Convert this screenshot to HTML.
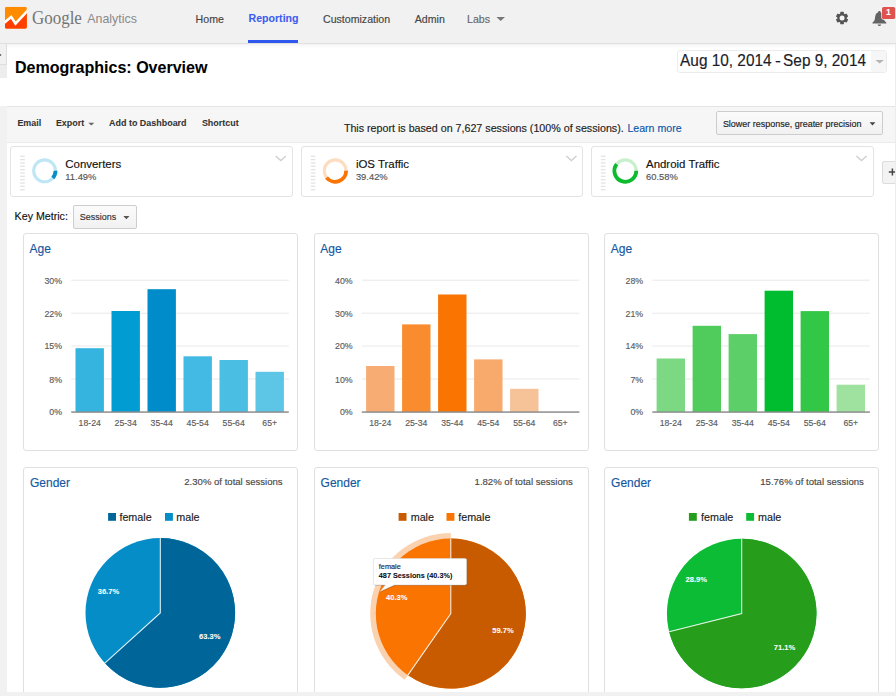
<!DOCTYPE html>
<html lang="en"><head><meta charset="utf-8"><title>Demographics: Overview - Google Analytics</title>
<style>
html,body{margin:0;padding:0;}
html{width:896px;height:696px;overflow:hidden;}
body{width:896px;height:696px;overflow:hidden;position:relative;background:#fff;font-family:"Liberation Sans",sans-serif;}
.t{position:absolute;white-space:nowrap;-webkit-text-stroke:0.15px currentColor;}
.b{position:absolute;box-sizing:border-box;}
svg{position:absolute;left:0;top:0;overflow:visible;}
.serif{font-family:"Liberation Serif",serif;}
</style></head><body>

<div class="b" style="left:0.00px;top:0.00px;width:896.00px;height:44.00px;background:#f1f1f1;border-bottom:1px solid #e0e0e0;box-shadow:0 1px 4px rgba(0,0,0,0.07);"></div>
<div class="b" style="left:0.00px;top:44.00px;width:7.00px;height:34.00px;background:#ededed;"></div>
<div class="b" style="left:0.00px;top:44.00px;width:7.00px;height:21.00px;background:#f1f1f1;border-right:1px solid #dedede;border-bottom:1px solid #dedede;"></div>
<div class="b" style="left:0.00px;top:106.00px;width:7.00px;height:590.00px;background:#f1f1f1;"></div>
<div class="b" style="left:0.00px;top:692.00px;width:896.00px;height:4.00px;background:#f1f1f1;"></div>
<div class="b" style="left:7.00px;top:106.00px;width:889.00px;height:37.00px;background:#f6f6f6;border-top:1px solid #e4e4e4;border-bottom:1px solid #ebebeb;"></div>
<svg width="896" height="44" viewBox="0 0 896 44">
<defs><clipPath id="lg"><rect x="4.9" y="6.8" width="22" height="21.9" rx="1.6"/></clipPath></defs>
<g clip-path="url(#lg)">
<rect x="4.9" y="6.8" width="22" height="21.9" fill="#ff8b00"/>
<path d="M4.9 22.3 L11.15 16.9 L15.5 23.7 L26.9 11.5 L26.9 28.7 L4.9 28.7 Z" fill="#ff3e00"/>
<path d="M3.9 23.1 L11.15 16.9 L15.5 23.7 L27.9 10.4" fill="none" stroke="#fff" stroke-width="2.6" stroke-linejoin="miter"/>
</g>
</svg>
<div class="t serif" style="left:32.20px;top:5.65px;font-size:19.6px;line-height:23.52px;color:#757575;-webkit-text-stroke-width:0;transform:scaleX(0.865);transform-origin:0 50%;">Google</div>
<div class="t " style="left:87.30px;top:12.46px;font-size:12.4px;line-height:14.88px;color:#8a8a8a;-webkit-text-stroke-width:0;">Analytics</div>
<div class="t " style="left:195.60px;top:12.87px;font-size:10.6px;line-height:12.72px;color:#444;">Home</div>
<div class="t " style="left:248.50px;top:12.17px;font-size:10.6px;line-height:12.72px;color:#3a5cf0;font-weight:bold;-webkit-text-stroke-width:0.06px;">Reporting</div>
<div class="b" style="left:248.40px;top:40.00px;width:50.00px;height:3.00px;background:#2f58ee;"></div>
<div class="t " style="left:323.00px;top:12.87px;font-size:10.6px;line-height:12.72px;color:#444;">Customization</div>
<div class="t " style="left:414.80px;top:12.87px;font-size:10.6px;line-height:12.72px;color:#444;">Admin</div>
<div class="t " style="left:467.00px;top:12.87px;font-size:10.6px;line-height:12.72px;color:#666;">Labs</div>
<svg width="896" height="44"><path d="M496.4 17 L505 17 L500.7 21 Z" fill="#777"/></svg>
<svg width="896" height="44">
<path d="M843.24 23.63 L840.86 23.63 L840.71 22.03 L839.27 21.20 L837.81 21.86 L836.63 19.81 L837.93 18.88 L837.93 17.22 L836.63 16.29 L837.81 14.24 L839.27 14.90 L840.71 14.07 L840.86 12.47 L843.24 12.47 L843.39 14.07 L844.83 14.90 L846.29 14.24 L847.47 16.29 L846.17 17.22 L846.17 18.88 L847.47 19.81 L846.29 21.86 L844.83 21.20 L843.39 22.03 Z" fill="#555" stroke="#555" stroke-width="1.2" stroke-linejoin="round"/><circle cx="842.05" cy="18.05" r="2.5" fill="#f4f4f4"/>
<path d="M879.4 11.1 c-0.8 0 -1.2 0.5 -1.2 1.2 c-2.2 0.8 -3.0 3.0 -3.2 5.4 c-0.15 2.0 -0.6 3.4 -2.5 4.9 v0.9 h13.8 v-0.9 c-1.9 -1.5 -2.35 -2.9 -2.5 -4.9 c-0.2 -2.4 -1.0 -4.6 -3.2 -5.4 c0 -0.7 -0.4 -1.2 -1.2 -1.2 Z M877.6 24.4 h3.6 c0 0.9 -0.8 1.5 -1.8 1.5 c-1.0 0 -1.8 -0.6 -1.8 -1.5 Z" fill="#636363"/>
<rect x="881.3" y="6.2" width="14.5" height="13.6" rx="2.2" fill="#f8f1f1"/>
<rect x="882.0" y="6.9" width="13.1" height="12.2" rx="1.6" fill="#e0524f"/>
</svg>
<div class="t " style="left:788.40px;width:200px;text-align:center;top:6.77px;font-size:8.8px;line-height:10.56px;color:#fff;font-weight:bold;-webkit-text-stroke-width:0.06px;">1</div>
<svg width="20" height="80"><path d="M-0.9 52.9 L1.5 54.9 L-0.9 56.9 Z" fill="#555"/></svg>
<div class="t " style="left:15.00px;top:58.01px;font-size:16.05px;line-height:19.26px;color:#000;font-weight:bold;-webkit-text-stroke-width:0.06px;">Demographics: Overview</div>
<div class="b" style="left:677.40px;top:49.50px;width:209.20px;height:23.00px;border:1px solid #ececec;border-radius:3px;background:#fff;"></div>
<div class="b" style="left:870.70px;top:50.50px;width:15.00px;height:21.00px;background:#f6f6f6;border-radius:0 2px 2px 0;"></div>
<div class="t " style="left:680.10px;top:51.84px;font-size:15.38px;line-height:18.46px;color:#1c1c28;transform:scaleY(1.05);transform-origin:0 78%;">Aug 10, 2014</div>
<div class="t " style="left:774.50px;top:51.64px;font-size:15.38px;line-height:18.46px;color:#1c1c28;transform:scaleX(1.15);transform-origin:0 50%;">-</div>
<div class="t " style="left:783.10px;top:51.84px;font-size:15.38px;line-height:18.46px;color:#1c1c28;transform:scaleY(1.05);transform-origin:0 78%;">Sep 9, 2014</div>
<svg width="896" height="80"><path d="M875.4 60 L883.9 60 L879.65 63.4 Z" fill="#b5b5b5"/></svg>
<div class="t " style="left:17.40px;top:117.63px;font-size:8.95px;line-height:10.74px;color:#333;font-weight:bold;-webkit-text-stroke-width:0.06px;">Email</div>
<div class="t " style="left:55.90px;top:117.63px;font-size:8.95px;line-height:10.74px;color:#333;font-weight:bold;-webkit-text-stroke-width:0.06px;">Export</div>
<div class="t " style="left:109.10px;top:117.63px;font-size:8.95px;line-height:10.74px;color:#333;font-weight:bold;-webkit-text-stroke-width:0.06px;">Add to Dashboard</div>
<div class="t " style="left:201.90px;top:117.63px;font-size:8.95px;line-height:10.74px;color:#333;font-weight:bold;-webkit-text-stroke-width:0.06px;">Shortcut</div>
<svg width="896" height="150"><path d="M88.3 122.8 L94.3 122.8 L91.3 125.6 Z" fill="#666"/></svg>
<div class="t " style="left:343.90px;top:121.58px;font-size:10.69px;line-height:12.83px;color:#222;">This report is based on 7,627 sessions (100% of sessions).</div>
<div class="t " style="left:627.40px;top:121.65px;font-size:10.62px;line-height:12.74px;color:#0d57a8;">Learn more</div>
<div class="b" style="left:716.00px;top:111.00px;width:167.00px;height:24.00px;border:1px solid #cdcdcd;border-radius:2px;background:linear-gradient(#fbfbfb,#f1f1f1);"></div>
<div class="t " style="left:722.90px;top:118.50px;font-size:8.98px;line-height:10.78px;color:#222;">Slower response, greater precision</div>
<svg width="896" height="150"><path d="M869.6 122.2 L875.4 122.2 L872.5 125.5 Z" fill="#444"/></svg>
<div class="b" style="left:10.00px;top:146.00px;width:283.00px;height:51.00px;border:1px solid #e3e3e3;border-radius:3px;background:#fff;"></div>
<svg width="896" height="200"><rect x="20.20" y="155.60" width="4.6" height="1.3" fill="#e3e3e3"/><rect x="20.20" y="158.95" width="4.6" height="1.3" fill="#e3e3e3"/><rect x="20.20" y="162.30" width="4.6" height="1.3" fill="#e3e3e3"/><rect x="20.20" y="165.65" width="4.6" height="1.3" fill="#e3e3e3"/><rect x="20.20" y="169.00" width="4.6" height="1.3" fill="#e3e3e3"/><rect x="20.20" y="172.35" width="4.6" height="1.3" fill="#e3e3e3"/><rect x="20.20" y="175.70" width="4.6" height="1.3" fill="#e3e3e3"/><rect x="20.20" y="179.05" width="4.6" height="1.3" fill="#e3e3e3"/><rect x="20.20" y="182.40" width="4.6" height="1.3" fill="#e3e3e3"/><rect x="20.20" y="185.75" width="4.6" height="1.3" fill="#e3e3e3"/><rect x="20.20" y="189.10" width="4.6" height="1.3" fill="#e3e3e3"/><circle cx="44.6" cy="170.8" r="10.95" fill="none" stroke="#bfe6f4" stroke-width="3.1"/><path d="M55.55 170.80 A10.95 10.95 0 0 1 52.82 178.04" fill="none" stroke="#058dc7" stroke-width="3.8"/><path d="M275.70 155.9 L280.80 160.6 L285.90 155.9" fill="none" stroke="#cfcfcf" stroke-width="1.3"/></svg>
<div class="t " style="left:65.30px;top:158.06px;font-size:11.45px;line-height:13.74px;color:#111;">Converters</div>
<div class="t " style="left:65.30px;top:171.00px;font-size:9.4px;line-height:11.28px;color:#555;">11.49%</div>
<div class="b" style="left:301.00px;top:146.00px;width:282.00px;height:51.00px;border:1px solid #e3e3e3;border-radius:3px;background:#fff;"></div>
<svg width="896" height="200"><rect x="310.80" y="155.60" width="4.6" height="1.3" fill="#e3e3e3"/><rect x="310.80" y="158.95" width="4.6" height="1.3" fill="#e3e3e3"/><rect x="310.80" y="162.30" width="4.6" height="1.3" fill="#e3e3e3"/><rect x="310.80" y="165.65" width="4.6" height="1.3" fill="#e3e3e3"/><rect x="310.80" y="169.00" width="4.6" height="1.3" fill="#e3e3e3"/><rect x="310.80" y="172.35" width="4.6" height="1.3" fill="#e3e3e3"/><rect x="310.80" y="175.70" width="4.6" height="1.3" fill="#e3e3e3"/><rect x="310.80" y="179.05" width="4.6" height="1.3" fill="#e3e3e3"/><rect x="310.80" y="182.40" width="4.6" height="1.3" fill="#e3e3e3"/><rect x="310.80" y="185.75" width="4.6" height="1.3" fill="#e3e3e3"/><rect x="310.80" y="189.10" width="4.6" height="1.3" fill="#e3e3e3"/><circle cx="335.2" cy="170.8" r="10.95" fill="none" stroke="#fddcc0" stroke-width="3.1"/><path d="M346.15 170.80 A10.95 10.95 0 0 1 326.58 177.55" fill="none" stroke="#f97400" stroke-width="3.8"/><path d="M566.30 155.9 L571.40 160.6 L576.50 155.9" fill="none" stroke="#cfcfcf" stroke-width="1.3"/></svg>
<div class="t " style="left:355.90px;top:158.06px;font-size:11.45px;line-height:13.74px;color:#111;">iOS Traffic</div>
<div class="t " style="left:355.90px;top:171.00px;font-size:9.4px;line-height:11.28px;color:#555;">39.42%</div>
<div class="b" style="left:591.00px;top:146.00px;width:283.00px;height:51.00px;border:1px solid #e3e3e3;border-radius:3px;background:#fff;"></div>
<svg width="896" height="200"><rect x="600.90" y="155.60" width="4.6" height="1.3" fill="#e3e3e3"/><rect x="600.90" y="158.95" width="4.6" height="1.3" fill="#e3e3e3"/><rect x="600.90" y="162.30" width="4.6" height="1.3" fill="#e3e3e3"/><rect x="600.90" y="165.65" width="4.6" height="1.3" fill="#e3e3e3"/><rect x="600.90" y="169.00" width="4.6" height="1.3" fill="#e3e3e3"/><rect x="600.90" y="172.35" width="4.6" height="1.3" fill="#e3e3e3"/><rect x="600.90" y="175.70" width="4.6" height="1.3" fill="#e3e3e3"/><rect x="600.90" y="179.05" width="4.6" height="1.3" fill="#e3e3e3"/><rect x="600.90" y="182.40" width="4.6" height="1.3" fill="#e3e3e3"/><rect x="600.90" y="185.75" width="4.6" height="1.3" fill="#e3e3e3"/><rect x="600.90" y="189.10" width="4.6" height="1.3" fill="#e3e3e3"/><circle cx="625.3" cy="170.8" r="10.95" fill="none" stroke="#c8f0cc" stroke-width="3.1"/><path d="M636.25 170.80 A10.95 10.95 0 1 1 616.68 164.05" fill="none" stroke="#0cbc2e" stroke-width="3.8"/><path d="M856.40 155.9 L861.50 160.6 L866.60 155.9" fill="none" stroke="#cfcfcf" stroke-width="1.3"/></svg>
<div class="t " style="left:646.00px;top:158.06px;font-size:11.45px;line-height:13.74px;color:#111;">Android Traffic</div>
<div class="t " style="left:646.00px;top:171.00px;font-size:9.4px;line-height:11.28px;color:#555;">60.58%</div>
<div class="b" style="left:881.90px;top:161.40px;width:20.00px;height:22.40px;border:1px solid #dcdcdc;background:#f3f3f3;border-radius:2px 0 0 2px;"></div>
<svg width="896" height="200"><path d="M888.8 172 H896 M892.4 168.4 V175.6" stroke="#444" stroke-width="1.5" fill="none"/></svg>
<div class="t " style="left:14.60px;top:210.21px;font-size:10.66px;line-height:12.79px;color:#111;">Key Metric:</div>
<div class="b" style="left:73.00px;top:205.00px;width:64.00px;height:24.00px;border:1px solid #cdcdcd;border-radius:2px;background:linear-gradient(#fbfbfb,#f1f1f1);"></div>
<div class="t " style="left:79.80px;top:211.70px;font-size:8.98px;line-height:10.78px;color:#333;">Sessions</div>
<svg width="896" height="240"><path d="M123.3 215.9 L129.5 215.9 L126.4 219.2 Z" fill="#555"/></svg>
<div class="b" style="left:23.00px;top:233.00px;width:275.00px;height:218.00px;border:1px solid #e0e0e0;border-radius:3px;background:#fff;"></div>
<div class="t " style="left:29.60px;top:242.01px;font-size:12.03px;line-height:14.44px;color:#15579f;">Age</div>
<svg width="896" height="460"><rect x="71.20" y="279.70" width="217.6" height="1" fill="#e9e9e9"/><rect x="71.20" y="312.70" width="217.6" height="1" fill="#e9e9e9"/><rect x="71.20" y="345.50" width="217.6" height="1" fill="#e9e9e9"/><rect x="71.20" y="378.50" width="217.6" height="1" fill="#e9e9e9"/><rect x="75.50" y="348.20" width="28.4" height="63.40" fill="#35b4e0"/><rect x="111.50" y="311.00" width="28.4" height="100.60" fill="#009cd2"/><rect x="147.50" y="289.20" width="28.4" height="122.40" fill="#008cca"/><rect x="183.50" y="356.30" width="28.4" height="55.30" fill="#42bae3"/><rect x="219.50" y="360.00" width="28.4" height="51.60" fill="#4bbee3"/><rect x="255.50" y="371.80" width="28.4" height="39.80" fill="#5dc5e6"/><rect x="71.20" y="411.55" width="217.6" height="1.0" fill="#555"/></svg>
<div class="t " style="right:834.00px;top:275.77px;font-size:8.8px;line-height:10.56px;color:#5c5c5c;">30%</div>
<div class="t " style="right:834.00px;top:308.77px;font-size:8.8px;line-height:10.56px;color:#5c5c5c;">22%</div>
<div class="t " style="right:834.00px;top:340.97px;font-size:8.8px;line-height:10.56px;color:#5c5c5c;">15%</div>
<div class="t " style="right:834.00px;top:374.57px;font-size:8.8px;line-height:10.56px;color:#5c5c5c;">8%</div>
<div class="t " style="right:834.00px;top:407.47px;font-size:8.8px;line-height:10.56px;color:#5c5c5c;">0%</div>
<div class="t " style="left:-10.30px;width:200px;text-align:center;top:418.37px;font-size:8.7px;line-height:10.44px;color:#5c5c5c;">18-24</div>
<div class="t " style="left:25.70px;width:200px;text-align:center;top:418.37px;font-size:8.7px;line-height:10.44px;color:#5c5c5c;">25-34</div>
<div class="t " style="left:61.70px;width:200px;text-align:center;top:418.37px;font-size:8.7px;line-height:10.44px;color:#5c5c5c;">35-44</div>
<div class="t " style="left:97.70px;width:200px;text-align:center;top:418.37px;font-size:8.7px;line-height:10.44px;color:#5c5c5c;">45-54</div>
<div class="t " style="left:133.70px;width:200px;text-align:center;top:418.37px;font-size:8.7px;line-height:10.44px;color:#5c5c5c;">55-64</div>
<div class="t " style="left:169.70px;width:200px;text-align:center;top:418.37px;font-size:8.7px;line-height:10.44px;color:#5c5c5c;">65+</div>
<div class="b" style="left:314.00px;top:233.00px;width:275.00px;height:218.00px;border:1px solid #e0e0e0;border-radius:3px;background:#fff;"></div>
<div class="t " style="left:320.20px;top:242.01px;font-size:12.03px;line-height:14.44px;color:#15579f;">Age</div>
<svg width="896" height="460"><rect x="361.80" y="279.70" width="217.6" height="1" fill="#e9e9e9"/><rect x="361.80" y="312.70" width="217.6" height="1" fill="#e9e9e9"/><rect x="361.80" y="345.50" width="217.6" height="1" fill="#e9e9e9"/><rect x="361.80" y="378.50" width="217.6" height="1" fill="#e9e9e9"/><rect x="366.10" y="366.00" width="28.4" height="45.60" fill="#f7ac73"/><rect x="402.10" y="324.40" width="28.4" height="87.20" fill="#f88c2e"/><rect x="438.10" y="294.50" width="28.4" height="117.10" fill="#f97400"/><rect x="474.10" y="359.40" width="28.4" height="52.20" fill="#f7aa6c"/><rect x="510.10" y="388.80" width="28.4" height="22.80" fill="#f6c297"/><rect x="361.80" y="411.55" width="217.6" height="1.0" fill="#555"/></svg>
<div class="t " style="right:543.40px;top:275.77px;font-size:8.8px;line-height:10.56px;color:#5c5c5c;">40%</div>
<div class="t " style="right:543.40px;top:308.77px;font-size:8.8px;line-height:10.56px;color:#5c5c5c;">30%</div>
<div class="t " style="right:543.40px;top:340.97px;font-size:8.8px;line-height:10.56px;color:#5c5c5c;">20%</div>
<div class="t " style="right:543.40px;top:374.57px;font-size:8.8px;line-height:10.56px;color:#5c5c5c;">10%</div>
<div class="t " style="right:543.40px;top:407.47px;font-size:8.8px;line-height:10.56px;color:#5c5c5c;">0%</div>
<div class="t " style="left:280.30px;width:200px;text-align:center;top:418.37px;font-size:8.7px;line-height:10.44px;color:#5c5c5c;">18-24</div>
<div class="t " style="left:316.30px;width:200px;text-align:center;top:418.37px;font-size:8.7px;line-height:10.44px;color:#5c5c5c;">25-34</div>
<div class="t " style="left:352.30px;width:200px;text-align:center;top:418.37px;font-size:8.7px;line-height:10.44px;color:#5c5c5c;">35-44</div>
<div class="t " style="left:388.30px;width:200px;text-align:center;top:418.37px;font-size:8.7px;line-height:10.44px;color:#5c5c5c;">45-54</div>
<div class="t " style="left:424.30px;width:200px;text-align:center;top:418.37px;font-size:8.7px;line-height:10.44px;color:#5c5c5c;">55-64</div>
<div class="t " style="left:460.30px;width:200px;text-align:center;top:418.37px;font-size:8.7px;line-height:10.44px;color:#5c5c5c;">65+</div>
<div class="b" style="left:604.00px;top:233.00px;width:275.00px;height:218.00px;border:1px solid #e0e0e0;border-radius:3px;background:#fff;"></div>
<div class="t " style="left:610.70px;top:242.01px;font-size:12.03px;line-height:14.44px;color:#15579f;">Age</div>
<svg width="896" height="460"><rect x="652.30" y="279.70" width="217.6" height="1" fill="#e9e9e9"/><rect x="652.30" y="312.70" width="217.6" height="1" fill="#e9e9e9"/><rect x="652.30" y="345.50" width="217.6" height="1" fill="#e9e9e9"/><rect x="652.30" y="378.50" width="217.6" height="1" fill="#e9e9e9"/><rect x="656.60" y="358.50" width="28.4" height="53.10" fill="#7dd884"/><rect x="692.60" y="325.80" width="28.4" height="85.80" fill="#4fcc5c"/><rect x="728.60" y="334.10" width="28.4" height="77.50" fill="#5ccf68"/><rect x="764.60" y="290.70" width="28.4" height="120.90" fill="#00bd30"/><rect x="800.60" y="311.10" width="28.4" height="100.50" fill="#33c748"/><rect x="836.60" y="384.70" width="28.4" height="26.90" fill="#9fe19f"/><rect x="652.30" y="411.55" width="217.6" height="1.0" fill="#555"/></svg>
<div class="t " style="right:252.90px;top:275.77px;font-size:8.8px;line-height:10.56px;color:#5c5c5c;">28%</div>
<div class="t " style="right:252.90px;top:308.77px;font-size:8.8px;line-height:10.56px;color:#5c5c5c;">21%</div>
<div class="t " style="right:252.90px;top:340.97px;font-size:8.8px;line-height:10.56px;color:#5c5c5c;">14%</div>
<div class="t " style="right:252.90px;top:374.57px;font-size:8.8px;line-height:10.56px;color:#5c5c5c;">7%</div>
<div class="t " style="right:252.90px;top:407.47px;font-size:8.8px;line-height:10.56px;color:#5c5c5c;">0%</div>
<div class="t " style="left:570.80px;width:200px;text-align:center;top:418.37px;font-size:8.7px;line-height:10.44px;color:#5c5c5c;">18-24</div>
<div class="t " style="left:606.80px;width:200px;text-align:center;top:418.37px;font-size:8.7px;line-height:10.44px;color:#5c5c5c;">25-34</div>
<div class="t " style="left:642.80px;width:200px;text-align:center;top:418.37px;font-size:8.7px;line-height:10.44px;color:#5c5c5c;">35-44</div>
<div class="t " style="left:678.80px;width:200px;text-align:center;top:418.37px;font-size:8.7px;line-height:10.44px;color:#5c5c5c;">45-54</div>
<div class="t " style="left:714.80px;width:200px;text-align:center;top:418.37px;font-size:8.7px;line-height:10.44px;color:#5c5c5c;">55-64</div>
<div class="t " style="left:750.80px;width:200px;text-align:center;top:418.37px;font-size:8.7px;line-height:10.44px;color:#5c5c5c;">65+</div>
<div class="b" style="left:23.00px;top:467.00px;width:275.00px;height:240.00px;border:1px solid #e0e0e0;border-radius:3px;background:#fff;"></div>
<div class="t " style="left:30.00px;top:476.04px;font-size:12.0px;line-height:14.4px;color:#15579f;">Gender</div>
<div class="t " style="right:613.40px;top:475.84px;font-size:9.57px;line-height:11.48px;color:#484848;">2.30% of total sessions</div>
<svg width="896" height="696"><rect x="108.10" y="513.0" width="7.9" height="7.8" fill="#00669a"/><rect x="165.00" y="513.0" width="7.9" height="7.8" fill="#058dc7"/><circle cx="160.3" cy="612.9" r="74.8" fill="#058dc7"/><path d="M160.3 612.9 L160.3 538.1 A74.8 74.8 0 1 1 104.82 663.07 Z" fill="#00669a"/><path d="M160.3 538.1 L160.3 612.9 L104.82 663.07" fill="none" stroke="#fff" stroke-opacity="0.9" stroke-width="1.05"/></svg>
<div class="t " style="left:119.40px;top:510.83px;font-size:10.75px;line-height:12.9px;color:#222;">female</div>
<div class="t " style="left:176.30px;top:510.83px;font-size:10.75px;line-height:12.9px;color:#222;">male</div>
<div class="t " style="left:8.40px;width:200px;text-align:center;top:586.65px;font-size:7.55px;line-height:9.06px;color:#fff;font-weight:bold;-webkit-text-stroke-width:0.06px;">36.7%</div>
<div class="t " style="left:109.70px;width:200px;text-align:center;top:631.75px;font-size:7.55px;line-height:9.06px;color:#fff;font-weight:bold;-webkit-text-stroke-width:0.06px;">63.3%</div>
<div class="b" style="left:314.00px;top:467.00px;width:275.00px;height:240.00px;border:1px solid #e0e0e0;border-radius:3px;background:#fff;"></div>
<div class="t " style="left:320.60px;top:476.04px;font-size:12.0px;line-height:14.4px;color:#15579f;">Gender</div>
<div class="t " style="right:323.10px;top:475.84px;font-size:9.57px;line-height:11.48px;color:#484848;">1.82% of total sessions</div>
<svg width="896" height="696"><rect x="398.60" y="513.0" width="7.9" height="7.8" fill="#c85a00"/><rect x="446.50" y="513.0" width="7.9" height="7.8" fill="#f97400"/><path d="M450.8 613.6 L404.66 679.69 A80.6 80.6 0 0 1 450.8 533.0 Z" fill="#fbd2b0"/><circle cx="450.8" cy="613.6" r="75.0" fill="#f97400"/><path d="M450.8 613.6 L450.8 538.6 A75.0 75.0 0 1 1 407.87 675.10 Z" fill="#c85a00"/><path d="M450.8 538.6 L450.8 613.6 L407.87 675.10" fill="none" stroke="#fff" stroke-opacity="0.9" stroke-width="1.05"/></svg>
<div class="t " style="left:410.70px;top:510.83px;font-size:10.75px;line-height:12.9px;color:#222;">male</div>
<div class="t " style="left:458.20px;top:510.83px;font-size:10.75px;line-height:12.9px;color:#222;">female</div>
<div class="t " style="left:296.70px;width:200px;text-align:center;top:592.95px;font-size:7.55px;line-height:9.06px;color:#fff;font-weight:bold;-webkit-text-stroke-width:0.06px;">40.3%</div>
<div class="t " style="left:402.90px;width:200px;text-align:center;top:625.85px;font-size:7.55px;line-height:9.06px;color:#fff;font-weight:bold;-webkit-text-stroke-width:0.06px;">59.7%</div>
<div class="b" style="left:604.00px;top:467.00px;width:275.00px;height:240.00px;border:1px solid #e0e0e0;border-radius:3px;background:#fff;"></div>
<div class="t " style="left:611.10px;top:476.04px;font-size:12.0px;line-height:14.4px;color:#15579f;">Gender</div>
<div class="t " style="right:32.10px;top:475.84px;font-size:9.57px;line-height:11.48px;color:#484848;">15.76% of total sessions</div>
<svg width="896" height="696"><rect x="688.90" y="513.0" width="7.9" height="7.8" fill="#269e1c"/><rect x="746.20" y="513.0" width="7.9" height="7.8" fill="#0cbc35"/><circle cx="741.7" cy="613.5" r="74.8" fill="#0cbc35"/><path d="M741.7 613.5 L741.7 538.7 A74.8 74.8 0 1 1 669.13 631.65 Z" fill="#269e1c"/><path d="M741.7 538.7 L741.7 613.5 L669.13 631.65" fill="none" stroke="#fff" stroke-opacity="0.9" stroke-width="1.05"/></svg>
<div class="t " style="left:701.00px;top:510.83px;font-size:10.75px;line-height:12.9px;color:#222;">female</div>
<div class="t " style="left:758.00px;top:510.83px;font-size:10.75px;line-height:12.9px;color:#222;">male</div>
<div class="t " style="left:596.20px;width:200px;text-align:center;top:574.95px;font-size:7.55px;line-height:9.06px;color:#fff;font-weight:bold;-webkit-text-stroke-width:0.06px;">28.9%</div>
<div class="t " style="left:684.50px;width:200px;text-align:center;top:643.45px;font-size:7.55px;line-height:9.06px;color:#fff;font-weight:bold;-webkit-text-stroke-width:0.06px;">71.1%</div>
<svg width="896" height="696"><path d="M375.0 558.5 H465.0 a1.6 1.6 0 0 1 1.6 1.6 V583.3 a1.6 1.6 0 0 1 -1.6 1.6 H394.4 L380.4 591.2 L385.4 584.9 H375.0 a1.6 1.6 0 0 1 -1.6 -1.6 V560.1 a1.6 1.6 0 0 1 1.6 -1.6 Z" transform="translate(0.7 0.8)" fill="#000" fill-opacity="0.22"/><path d="M375.0 558.5 H465.0 a1.6 1.6 0 0 1 1.6 1.6 V583.3 a1.6 1.6 0 0 1 -1.6 1.6 H394.4 L380.4 591.2 L385.4 584.9 H375.0 a1.6 1.6 0 0 1 -1.6 -1.6 V560.1 a1.6 1.6 0 0 1 1.6 -1.6 Z" fill="#fff" stroke="#d8d8d8" stroke-width="0.6"/></svg>
<div class="t " style="left:378.80px;top:562.89px;font-size:7.3px;line-height:8.76px;color:#223;">female</div>
<div class="t " style="left:378.80px;top:572.11px;font-size:7.28px;line-height:8.74px;color:#0b0b14;font-weight:bold;-webkit-text-stroke-width:0.06px;">487 Sessions (40.3%)</div>
<div class="b" style="left:895.00px;top:44.00px;width:1.00px;height:648.00px;background:#ececec;"></div>
<div class="b" style="left:0.00px;top:692.00px;width:896.00px;height:4.00px;background:#f1f1f1;"></div>
<div class="b" style="left:0.00px;top:106.00px;width:7.00px;height:590.00px;background:#f1f1f1;"></div>
</body></html>
